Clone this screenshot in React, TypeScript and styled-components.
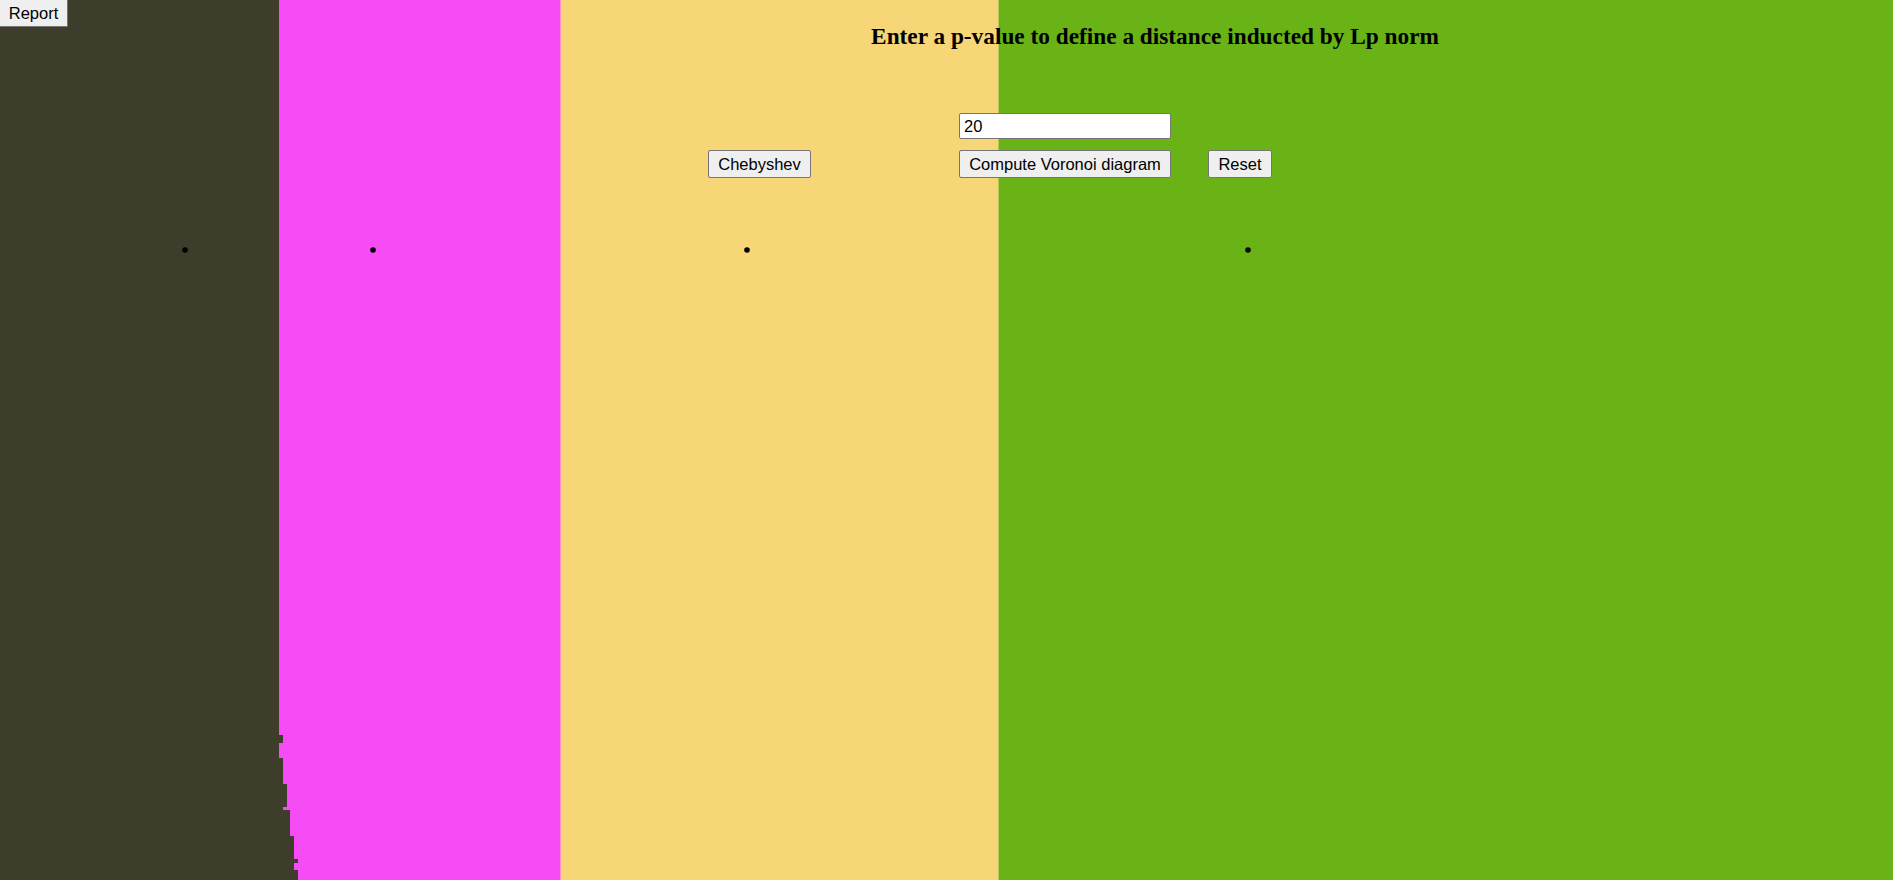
import React from "react";
import styled, { createGlobalStyle } from "styled-components";

const Global = createGlobalStyle`
  html, body { margin: 0; padding: 0; background: #ffffff; }
  body { font-family: "Liberation Serif", "Times New Roman", serif; overflow: hidden; }
`;

const Stage = styled.div`
  position: relative;
  width: 1893px;
  height: 880px;
  overflow: hidden;
`;

const Canvas = styled.svg`
  position: absolute;
  left: 0;
  top: 0;
  display: block;
`;

const Overlay = styled.div`
  position: relative;
  z-index: 1;
  display: flex;
  flex-direction: column;
`;

const Header = styled.div`
  display: flex;
  align-items: flex-start;
`;

const Button = styled.button<{ $w?: number }>`
  box-sizing: border-box;
  height: 28px;
  width: ${(p) => (p.$w ? `${p.$w}px` : "auto")};
  padding: 0 8px;
  margin: 0;
  background: #efefef;
  color: #000;
  border: 1px solid #767676;
  border-radius: 2px;
  font-family: "Liberation Sans", Arial, sans-serif;
  font-size: 16.5px;
  line-height: 26px;
  text-align: center;
  white-space: nowrap;
  cursor: default;
`;

const ReportButton = styled(Button)`
  height: 27px;
  line-height: 25px;
  border-top: none;
  border-left: none;
  border-radius: 0 0 2px 0;
`;

const Title = styled.h3`
  flex: 1;
  margin: 23px 0 0 0;
  padding-left: 349px;
  text-align: center;
  font-family: "Liberation Serif", "Times New Roman", serif;
  font-weight: bold;
  font-size: 23.3px;
  line-height: 27px;
  color: #000;
`;

const Controls = styled.div`
  display: grid;
  grid-template-columns: 103px 148px 212px 37px 64px;
  grid-template-rows: 26px 28px;
  row-gap: 11px;
  margin: 63px 0 0 708px;
`;

const Cell = styled.div<{ $col: number; $row: number }>`
  grid-column: ${(p) => p.$col};
  grid-row: ${(p) => p.$row};
  display: flex;
`;

const PInput = styled.input`
  box-sizing: border-box;
  width: 212px;
  height: 26px;
  margin: 0;
  padding: 0 4px;
  border: 1px solid #767676;
  border-radius: 2px;
  background: #fff;
  color: #000;
  font-family: "Liberation Sans", Arial, sans-serif;
  font-size: 16.5px;
  outline: none;
`;

const dark =
  "0,0 279,0 279,735 283,735 283,743 279,743 279,758 283,758 283,784 287,784 287,807 283,807 283,810 290,810 290,836 294,836 294,859 298,859 298,863 294,863 294,870 298,870 298,880 0,880";

const sites = [185, 373, 747, 1248];

function Voronoi() {
  return (
    <Canvas width={1893} height={880} viewBox="0 0 1893 880">
      <rect x={0} y={0} width={561} height={880} fill="#f54cf5" />
      <rect x={561} y={0} width={438} height={880} fill="#f6d676" />
      <rect x={999} y={0} width={894} height={880} fill="#6ab316" />
      <rect x={560} y={0} width={1} height={880} fill="#f893c0" />
      <rect x={998} y={0} width={1} height={880} fill="#bcc75a" />
      <polygon points={dark} fill="#3e3d2c" />
      {sites.map((x) => (
        <circle key={x} cx={x} cy={250} r={2.8} fill="#000" />
      ))}
    </Canvas>
  );
}

export default function App() {
  return (
    <>
      <Global />
      <Stage>
        <Voronoi />
        <Overlay>
          <Header>
            <ReportButton $w={68}>Report</ReportButton>
            <Title>Enter a p-value to define a distance inducted by Lp norm</Title>
          </Header>
          <Controls>
            <Cell $col={3} $row={1}>
              <PInput defaultValue="20" />
            </Cell>
            <Cell $col={1} $row={2}>
              <Button $w={103}>Chebyshev</Button>
            </Cell>
            <Cell $col={3} $row={2}>
              <Button $w={212}>Compute Voronoi diagram</Button>
            </Cell>
            <Cell $col={5} $row={2}>
              <Button $w={64}>Reset</Button>
            </Cell>
          </Controls>
        </Overlay>
      </Stage>
    </>
  );
}
